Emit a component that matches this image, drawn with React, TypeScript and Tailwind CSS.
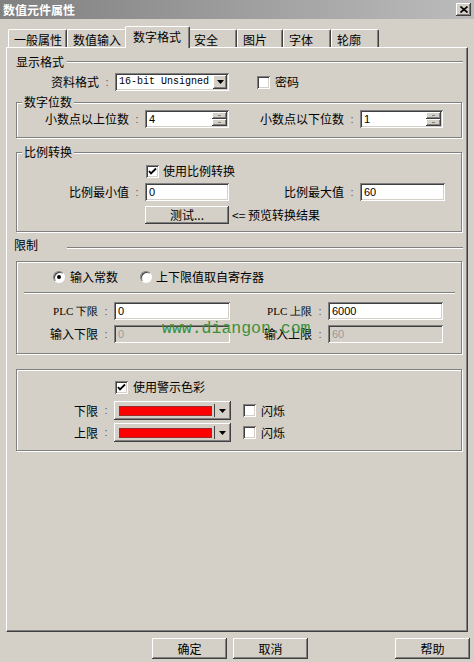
import React from "react";

// classic win9x bevels
const raised =
  "bg-[#d4d0c8] shadow-[inset_-1px_-1px_#404040,inset_1px_1px_#ffffff,inset_-2px_-2px_#808080,inset_2px_2px_#d4d0c8]";
const sunken =
  "shadow-[inset_1px_1px_#808080,inset_-1px_-1px_#ffffff,inset_2px_2px_#404040,inset_-2px_-2px_#d4d0c8]";
const etched =
  "border border-[#808080] shadow-[1px_1px_0_#ffffff,inset_1px_1px_0_#ffffff]";

const tabs = [
  { label: "一般属性", w: "w-[59px]" },
  { label: "数值输入", w: "w-[60px]" },
  { label: "数字格式", w: "w-[65px]", active: true },
  { label: "安全", w: "w-[49px]" },
  { label: "图片", w: "w-[46px]" },
  { label: "字体", w: "w-[48px]" },
  { label: "轮廓", w: "w-[48px]" },
];

function Label({ text, width, serif }: { text: string; width: string; serif?: boolean }) {
  return (
    <div className={`${width} flex shrink-0 items-center justify-end`}>
      <span className={serif ? "font-['Liberation_Serif',serif] text-[11px]" : ""}>{text}</span>
      <span className="w-[16px] text-center font-['Liberation_Sans',sans-serif] text-[11px] text-[#555]">:</span>
    </div>
  );
}

function Field({ value, width, disabled }: { value: string; width: string; disabled?: boolean }) {
  return (
    <div
      className={`${width} ${sunken} h-[18px] shrink-0 flex items-center pl-[4px] font-['Liberation_Sans',sans-serif] text-[11px] ${
        disabled ? "bg-[#d4d0c8] text-[#9a9a9a]" : "bg-white text-black"
      }`}
    >
      {value}
    </div>
  );
}

function SpinField({ value, width }: { value: string; width: string }) {
  return (
    <div className={`${width} ${sunken} h-[18px] shrink-0 flex items-center bg-white pl-[4px] pr-[2px] font-['Liberation_Sans',sans-serif] text-[11px]`}>
      <span className="flex-1">{value}</span>
      <div className="flex flex-col">
        <div className={`${raised} w-[15px] h-[7px] flex items-center justify-center`}>
          <div className="w-[3px] h-px bg-[#808080]" />
        </div>
        <div className={`${raised} w-[15px] h-[7px] flex items-center justify-center`}>
          <div className="w-[3px] h-px bg-[#808080]" />
        </div>
      </div>
    </div>
  );
}

function Arrow() {
  return (
    <svg width="7" height="4" viewBox="0 0 7 4">
      <path d="M0 0h7L3.5 4z" fill="#000" />
    </svg>
  );
}

function Check({ checked }: { checked?: boolean }) {
  return (
    <div className={`${sunken} w-[13px] h-[13px] shrink-0 bg-white flex items-center justify-center`}>
      {checked ? (
        <svg width="9" height="9" viewBox="0 0 9 9">
          <polyline points="1,4 3,6.5 8,1.5" fill="none" stroke="#000" strokeWidth="1.8" />
        </svg>
      ) : null}
    </div>
  );
}

function Radio({ checked }: { checked?: boolean }) {
  return (
    <div className="w-[12px] h-[12px] shrink-0 rounded-full bg-white border border-t-[#808080] border-l-[#808080] border-r-white border-b-white shadow-[inset_1px_1px_#404040] flex items-center justify-center">
      {checked ? <div className="w-[4px] h-[4px] rounded-full bg-black" /> : null}
    </div>
  );
}

function ColorCombo() {
  return (
    <div className={`${raised} w-[117px] h-[19px] shrink-0 flex items-center pl-[5px] pr-[2px]`}>
      <div className="w-[93px] h-[10px] bg-[#ff0000] border border-[#9a2a2a]" />
      <div className="ml-[2px] w-px h-[13px] bg-[#404040]" />
      <div className="flex-1 flex items-center justify-center">
        <Arrow />
      </div>
    </div>
  );
}

function Button({ text, width }: { text: string; width: string }) {
  return (
    <div className={`${raised} ${width} h-[21px] shrink-0 flex items-center justify-center`}>{text}</div>
  );
}

function GroupLabel({ text }: { text: string }) {
  return (
    <div className="absolute -top-[8px] left-[5px] bg-[#d4d0c8] px-[2px] leading-[14px]">{text}</div>
  );
}

export default function App() {
  return (
    <div className="w-[474px] h-[662px] overflow-hidden bg-[#d4d0c8] font-['Noto_Sans_CJK_SC','Noto_Sans',sans-serif] text-[12px] leading-none text-black">
      {/* title bar */}
      <div className="h-[19px] flex items-center justify-between bg-linear-to-r from-[#808080] to-[#bcbcbc] pl-[3px] pr-[3px]">
        <span className="font-bold text-white">数值元件属性</span>
        <div className={`${raised} w-[15px] h-[13px] flex items-center justify-center`}>
          <svg width="8" height="7" viewBox="0 0 8 7">
            <path d="M0.5 0.5l7 6M7.5 0.5l-7 6" stroke="#000" strokeWidth="1.6" />
          </svg>
        </div>
      </div>

      {/* tabs */}
      <div className="mt-[7px] h-[21px] flex items-end pl-[8px]">
        {tabs.map((t) =>
          t.active ? (
            <div
              key={t.label}
              className={`${t.w} relative z-10 -mx-[2px] -mb-px h-[22px] shrink-0 rounded-t-[2px] border-l border-t border-white border-r border-r-[#404040] bg-[#d4d0c8] pl-[7px] pt-[4px] shadow-[inset_-1px_0_#808080]`}
            >
              {t.label}
            </div>
          ) : (
            <div
              key={t.label}
              className={`${t.w} h-[18px] shrink-0 rounded-t-[2px] border-l border-t border-white border-r border-r-[#404040] pl-[5px] pt-[4px] shadow-[inset_-1px_0_#808080]`}
            >
              {t.label}
            </div>
          ),
        )}
      </div>

      {/* panel */}
      <div className="relative ml-[6px] w-[462px] h-[585px] flex flex-col border border-l-white border-t-white border-r-[#404040] border-b-[#404040] shadow-[inset_-1px_-1px_#808080]">
        {/* 显示格式 */}
        <div className="mt-[7px] h-[14px] flex items-center pl-[9px] pr-[4px]">
          <span className="w-[51px] shrink-0">显示格式</span>
          <div className="flex-1 h-[2px] border-t border-[#808080] border-b border-b-white" />
        </div>
        <div className="mt-[4px] h-[18px] flex items-center">
          <Label text="资料格式" width="w-[108px]" />
          <div className={`${sunken} w-[114px] h-[18px] shrink-0 bg-white flex items-center pl-[4px] pr-[2px]`}>
            <span className="flex-1 font-['Liberation_Mono',monospace] text-[10px]">16-bit Unsigned</span>
            <div className={`${raised} w-[14px] h-[14px] flex items-center justify-center`}>
              <Arrow />
            </div>
          </div>
          <div className="ml-[28px]">
            <Check />
          </div>
          <span className="ml-[5px]">密码</span>
        </div>

        {/* 数字位数 */}
        <div className={`${etched} relative mt-[11px] ml-[9px] w-[446px] h-[36px]`}>
          <GroupLabel text="数字位数" />
          <div className="mt-[7px] h-[18px] flex items-center">
            <Label text="小数点以上位数" width="w-[128px]" />
            <SpinField value="4" width="w-[84px]" />
            <Label text="小数点以下位数" width="w-[131px]" />
            <SpinField value="1" width="w-[83px]" />
          </div>
        </div>

        {/* 比例转换 */}
        <div className={`${etched} relative mt-[14px] ml-[9px] w-[446px] h-[80px]`}>
          <GroupLabel text="比例转换" />
          <div className="mt-[11px] h-[14px] flex items-center pl-[129px]">
            <Check checked />
            <span className="ml-[4px]">使用比例转换</span>
          </div>
          <div className="mt-[5px] h-[18px] flex items-center">
            <Label text="比例最小值" width="w-[128px]" />
            <Field value="0" width="w-[84px]" />
            <Label text="比例最大值" width="w-[131px]" />
            <Field value="60" width="w-[85px]" />
          </div>
          <div className="mt-[5px] h-[18px] flex items-center pl-[128px]">
            <div className={`${raised} w-[84px] h-[18px] flex items-center justify-center`}>测试...</div>
            <span className="ml-[3px]">&lt;= 预览转换结果</span>
          </div>
        </div>

        {/* 限制 */}
        <div className="mt-[6px] h-[14px] flex items-center pl-[7px] pr-[4px]">
          <span className="w-[53px] shrink-0">限制</span>
          <div className="mt-[6px] flex-1 h-[2px] border-t border-[#808080] border-b border-b-white" />
        </div>

        <div className={`${etched} relative mt-[9px] ml-[9px] w-[446px] h-[93px]`}>
          <div className="mt-[8px] h-[14px] flex items-center pl-[36px]">
            <Radio checked />
            <span className="ml-[5px]">输入常数</span>
            <div className="ml-[22px]">
              <Radio />
            </div>
            <span className="ml-[4px]">上下限值取自寄存器</span>
          </div>
          <div className="mt-[8px] ml-[7px] mr-[6px] h-[2px] border-t border-[#808080] border-b border-b-white" />
          <div className="mt-[8px] h-[18px] flex items-center">
            <Label text="PLC 下限" width="w-[97px]" serif />
            <Field value="0" width="w-[116px]" />
            <Label text="PLC 上限" width="w-[98px]" serif />
            <Field value="6000" width="w-[115px]" />
          </div>
          <div className="mt-[5px] h-[18px] flex items-center">
            <Label text="输入下限" width="w-[97px]" />
            <Field value="0" width="w-[116px]" disabled />
            <Label text="输入上限" width="w-[98px]" />
            <Field value="60" width="w-[115px]" disabled />
          </div>
        </div>

        {/* 警示色彩 */}
        <div className={`${etched} relative mt-[15px] ml-[9px] w-[446px] h-[82px]`}>
          <div className="mt-[10px] h-[14px] flex items-center pl-[98px]">
            <Check checked />
            <span className="ml-[5px]">使用警示色彩</span>
          </div>
          <div className="mt-[7px] h-[19px] flex items-center">
            <Label text="下限" width="w-[97px]" />
            <ColorCombo />
            <div className="ml-[12px]">
              <Check />
            </div>
            <span className="ml-[5px]">闪烁</span>
          </div>
          <div className="mt-[3px] h-[19px] flex items-center">
            <Label text="上限" width="w-[97px]" />
            <ColorCombo />
            <div className="ml-[12px]">
              <Check />
            </div>
            <span className="ml-[5px]">闪烁</span>
          </div>
        </div>

        {/* watermark */}
        <div className="absolute left-[155px] top-[273px] font-['Liberation_Mono',monospace] text-[16.5px] text-[#3a8f3a]">
          www.diangon.com
        </div>
      </div>

      {/* buttons */}
      <div className="mt-[6px] flex pl-[152px]">
        <Button text="确定" width="w-[75px]" />
        <div className="ml-[6px]">
          <Button text="取消" width="w-[75px]" />
        </div>
        <div className="ml-[87px]">
          <Button text="帮助" width="w-[75px]" />
        </div>
      </div>
    </div>
  );
}
